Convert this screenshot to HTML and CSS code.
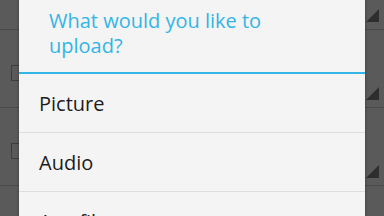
FILE: index.html
```html
<!DOCTYPE html>
<html>
<head>
<meta charset="utf-8">
<link rel="stylesheet" href="styles.css">
</head>
<body>
<div class="screen">
  <div class="backdrop">
    <div class="bg-row bg-row-top">
      <svg class="spinner" viewBox="0 0 13 13"><polygon points="13,0 13,13 0,13"/></svg>
    </div>
    <div class="bg-row">
      <span class="checkbox"></span>
      <svg class="spinner" viewBox="0 0 13 13"><polygon points="13,0 13,13 0,13"/></svg>
    </div>
    <div class="bg-row">
      <span class="checkbox"></span>
      <svg class="spinner" viewBox="0 0 13 13"><polygon points="13,0 13,13 0,13"/></svg>
    </div>
    <div class="bg-row">
      <span class="checkbox"></span>
      <svg class="spinner" viewBox="0 0 13 13"><polygon points="13,0 13,13 0,13"/></svg>
    </div>
  </div>
  <div class="dialog">
    <div class="dialog-title">What would you like to upload?</div>
    <ul class="options">
      <li class="option">Picture</li>
      <li class="option">Audio</li>
      <li class="option">Any file</li>
    </ul>
  </div>
</div>
</body>
</html>
```
FILE: styles.css
```css
html, body {
  margin: 0;
  padding: 0;
  width: 384px;
  height: 216px;
  overflow: hidden;
  background: #5a5a5a;
}

.screen {
  position: relative;
  width: 384px;
  height: 216px;
  overflow: hidden;
  font-family: "Open Sans", "Noto Sans", sans-serif;
}

.backdrop {
  display: flex;
  flex-direction: column;
  background: #5a5a5a;
  height: 100%;
}

.bg-row {
  height: 77px;
  flex: none;
  border-bottom: 1px solid #4a4a4a;
  display: flex;
  align-items: center;
  justify-content: space-between;
  padding: 0 5px 0 11px;
}

.bg-row-top {
  height: 29px;
  justify-content: flex-end;
}

.checkbox {
  width: 16px;
  height: 16px;
  box-sizing: border-box;
  border: 1px solid #3c3c3c;
  margin-top: 8px;
}

.spinner {
  display: block;
  align-self: flex-end;
  margin-bottom: 7px;
  width: 13px;
  height: 13px;
  fill: #2e2e2e;
}

.dialog {
  position: absolute;
  left: 19px;
  top: 0;
  width: 346px;
  height: 230px;
  background: #f4f4f4;
  box-shadow: 0 0 3px rgba(0, 0, 0, 0.35);
}

.dialog-title {
  color: #33b5e5;
  font-size: 20px;
  line-height: 25px;
  padding: 8px 30px 14px 30px;
  border-bottom: 2px solid #33b5e5;
}

.options {
  list-style: none;
  margin: 0;
  padding: 0;
}

.option {
  height: 58px;
  border-bottom: 1px solid #dedede;
  display: flex;
  align-items: center;
  padding-left: 20px;
  font-size: 20px;
  color: #1c1c1c;
}
```
